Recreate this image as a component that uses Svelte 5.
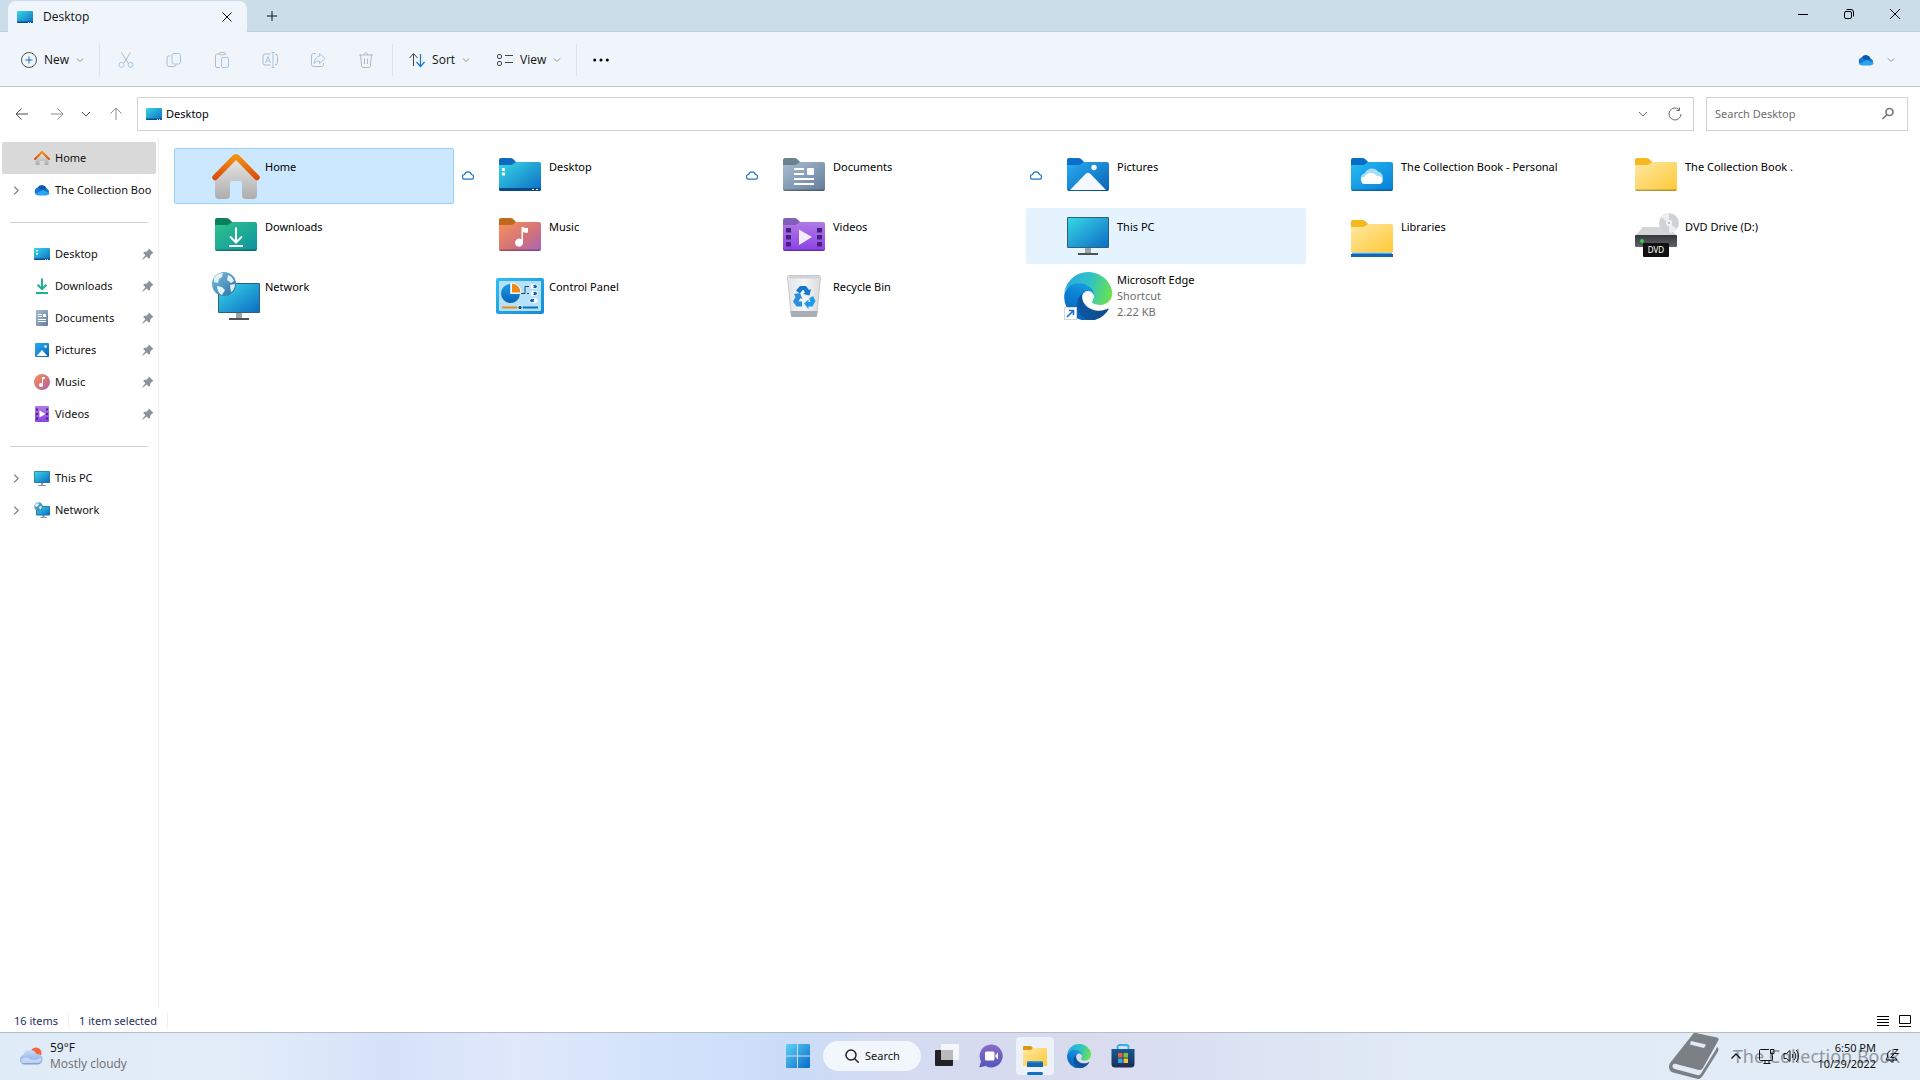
<script>
	const tools = ['Cut', 'Copy', 'Paste', 'Rename', 'Share', 'Delete'];

	const pinned = ['Desktop', 'Downloads', 'Documents', 'Pictures', 'Music', 'Videos'];

	const files = [
		{ name: 'Home', icon: 'home', selected: true },
		{ name: 'Desktop', icon: 'folder-desktop', cloud: true },
		{ name: 'Documents', icon: 'folder-documents', cloud: true },
		{ name: 'Pictures', icon: 'folder-pictures', cloud: true },
		{ name: 'The Collection Book - Personal', icon: 'folder-onedrive' },
		{ name: 'The Collection Book .', icon: 'folder' },
		{ name: 'Downloads', icon: 'folder-downloads' },
		{ name: 'Music', icon: 'folder-music' },
		{ name: 'Videos', icon: 'folder-videos' },
		{ name: 'This PC', icon: 'pc', hovered: true },
		{ name: 'Libraries', icon: 'libraries' },
		{ name: 'DVD Drive (D:)', icon: 'dvd' },
		{ name: 'Network', icon: 'network' },
		{ name: 'Control Panel', icon: 'control-panel' },
		{ name: 'Recycle Bin', icon: 'recycle' },
		{ name: 'Microsoft Edge', icon: 'edge-shortcut', type: 'Shortcut', size: '2.22 KB' }
	];

	// tab colour, front fill
	const folders = {
		'folder-desktop': ['#0f6cbd', 'url(#g-desk)'],
		'folder-documents': ['#6b8291', 'url(#g-docs)'],
		'folder-pictures': ['#0b6ec8', 'url(#g-pics)'],
		'folder-onedrive': ['#0a6cc4', 'url(#g-one)'],
		folder: ['#f6b81f', 'url(#g-yellow)'],
		'folder-downloads': ['#0c7f5d', 'url(#g-down)'],
		'folder-music': ['#c2681c', 'url(#g-music)'],
		'folder-videos': ['#8060b8', 'url(#g-video)']
	};
</script>

<svg class="defs" width="0" height="0" aria-hidden="true">
	<defs>
		<linearGradient id="g-desk" x1="0" y1="0" x2="1" y2="1"><stop offset="0" stop-color="#37d7e6" /><stop offset="1" stop-color="#0d6dc4" /></linearGradient>
		<linearGradient id="g-docs" x1="0" y1="0" x2="1" y2="1"><stop offset="0" stop-color="#a8bdd2" /><stop offset="1" stop-color="#647d99" /></linearGradient>
		<linearGradient id="g-pics" x1="0" y1="0" x2="1" y2="1"><stop offset="0" stop-color="#28aef0" /><stop offset="1" stop-color="#0b61b5" /></linearGradient>
		<linearGradient id="g-one" x1="0" y1="0" x2="1" y2="1"><stop offset="0" stop-color="#25bdf2" /><stop offset="1" stop-color="#087dd6" /></linearGradient>
		<linearGradient id="g-yellow" x1="0" y1="0" x2="1" y2="1"><stop offset="0" stop-color="#ffe8a3" /><stop offset="1" stop-color="#ffc936" /></linearGradient>
		<linearGradient id="g-down" x1="0" y1="0" x2="1" y2="1"><stop offset="0" stop-color="#2fc58c" /><stop offset="1" stop-color="#0e91a0" /></linearGradient>
		<linearGradient id="g-music" x1="0" y1="0" x2="1" y2="1"><stop offset="0" stop-color="#f79459" /><stop offset=".6" stop-color="#d0707c" /><stop offset="1" stop-color="#a566bd" /></linearGradient>
		<linearGradient id="g-video" x1="0" y1="0" x2="0" y2="1"><stop offset="0" stop-color="#b07be6" /><stop offset="1" stop-color="#8c40e6" /></linearGradient>
		<linearGradient id="g-wall" x1="0" y1="0" x2="0" y2="1"><stop offset="0" stop-color="#e6e6e6" /><stop offset="1" stop-color="#adadad" /></linearGradient>
		<linearGradient id="g-roof" x1="0" y1="0" x2="0" y2="1"><stop offset="0" stop-color="#f29111" /><stop offset="1" stop-color="#dc4f0b" /></linearGradient>
		<linearGradient id="g-globe" x1="0" y1="0" x2="1" y2="1"><stop offset="0" stop-color="#7cc0e2" /><stop offset="1" stop-color="#2d6f9e" /></linearGradient>
		<linearGradient id="g-panel" x1="0" y1="0" x2="1" y2="1"><stop offset="0" stop-color="#33bdf2" /><stop offset="1" stop-color="#128bd8" /></linearGradient>
		<linearGradient id="g-pie" x1="0" y1="0" x2="0" y2="1"><stop offset="0" stop-color="#1d9be8" /><stop offset="1" stop-color="#0b62b4" /></linearGradient>
		<linearGradient id="g-drive" x1="0" y1="0" x2="0" y2="1"><stop offset="0" stop-color="#33363a" /><stop offset="1" stop-color="#606468" /></linearGradient>
		<linearGradient id="g-bin" x1="0" y1="0" x2="1" y2="0"><stop offset="0" stop-color="#e3e5e8" /><stop offset=".5" stop-color="#f4f5f6" /><stop offset="1" stop-color="#d9dbde" /></linearGradient>
		<linearGradient id="g-edge1" x1="0" y1="0" x2="1" y2="0"><stop offset="0" stop-color="#0c59a4" /><stop offset="1" stop-color="#114a8b" /></linearGradient>
		<linearGradient id="g-edge2" x1=".7" y1="0" x2=".3" y2="1"><stop offset="0" stop-color="#1b9de2" /><stop offset=".5" stop-color="#0a7cd0" /><stop offset="1" stop-color="#0a60b8" /></linearGradient>
		<linearGradient id="g-edge3" x1="0" y1=".4" x2="1" y2=".6"><stop offset="0" stop-color="#2aa9e4" /><stop offset=".5" stop-color="#2fc3c5" /><stop offset="1" stop-color="#6be24e" /></linearGradient>
		<linearGradient id="g-win" gradientUnits="userSpaceOnUse" x1="0" y1="0" x2="24" y2="24"><stop offset="0" stop-color="#5fd2f8" /><stop offset="1" stop-color="#0669c8" /></linearGradient>
		<linearGradient id="g-chat" x1="0" y1="0" x2="0" y2="1"><stop offset="0" stop-color="#8a6bc4" /><stop offset="1" stop-color="#5457bd" /></linearGradient>
		<linearGradient id="g-store" x1="0" y1="0" x2="0" y2="1"><stop offset="0" stop-color="#155a97" /><stop offset="1" stop-color="#1d2b54" /></linearGradient>
		<linearGradient id="g-cloud" x1="0" y1="0" x2="0" y2="1"><stop offset="0" stop-color="#c9dcf7" /><stop offset=".6" stop-color="#9dbbea" /><stop offset="1" stop-color="#7e9fd8" /></linearGradient>
	</defs>
</svg>

{#snippet chevron()}
	<svg class="chev" viewBox="0 0 8 8" aria-hidden="true"><path d="M1 2.500 4 5.500 7 2.500" /></svg>
{/snippet}

{#snippet oneDrive()}
	<svg class="i16" viewBox="0 0 16 16" aria-hidden="true">
		<path fill="#1577d2" d="M4 13.200A3.900 3.900 0 0 1 3.600 5.600 5 5 0 0 1 12.600 6.600 3.400 3.400 0 0 1 12.500 13.200z" />
		<path fill="#0d59ae" d="M3.800 5.400A5 5 0 0 1 12.500 6.500L9 8.500z" />
		<path fill="#2ba5ee" d="M1 12 9 8l6.700 3.300a3.300 3.300 0 0 1-3.200 1.900H4A3.900 3.900 0 0 1 1 12z" />
	</svg>
{/snippet}

{#snippet desktopIcon()}
	<svg class="i16" viewBox="0 0 16 16" aria-hidden="true">
		<rect y="2" width="16" height="12" rx="1" fill="url(#g-desk)" />
		<path fill="#0c4d86" d="M0 12.500h16V13a1 1 0 0 1-1 1H1a1 1 0 0 1-1-1z" />
		<path fill="#fff" d="M11 13h1v.8h-1zM13 13h1v.8h-1z" />
	</svg>
{/snippet}

{#snippet edge()}
	<svg class="fill" viewBox="4 0 256 256" aria-hidden="true">
		<path fill="url(#g-edge1)" d="M235.680 195.460a93.730 93.730 0 0 1-10.540 4.710 101.870 101.870 0 0 1-35.900 6.460c-47.320 0-88.540-32.550-88.540-74.320a31.480 31.480 0 0 1 16.430-27.310c-42.800 1.800-53.800 46.400-53.800 72.530 0 73.880 68.090 81.370 82.760 81.370 7.910 0 19.840-2.300 27-4.560l1.310-.44a128.340 128.340 0 0 0 66.600-52.800 4 4 0 0 0-5.320-5.640z" />
		<path fill="url(#g-edge2)" d="M110.340 246.340A79.200 79.200 0 0 1 87.600 225a80.720 80.720 0 0 1 29.530-120c3.120-1.470 8.450-4.130 15.540-4a32.350 32.350 0 0 1 25.690 13 31.880 31.880 0 0 1 6.360 18.660c0-.21 24.460-79.600-80-79.600-43.900 0-80 41.660-80 78.210a130.150 130.150 0 0 0 12.110 56 128 128 0 0 0 156.380 67.110 75.550 75.550 0 0 1-62.780-8z" />
		<path fill="url(#g-edge3)" d="M156.940 153.780c-.81 1.050-3.300 2.500-3.300 5.660 0 2.610 1.700 5.120 4.720 7.230 14.380 10 41.490 8.680 41.560 8.680a59.560 59.560 0 0 0 30.270-8.350 61.380 61.380 0 0 0 30.430-52.880c.26-22.410-8-37.310-11.340-43.910C228.090 28.760 182.350 0 132.610 0a128 128 0 0 0-128 126.200c.48-36.540 36.800-66.050 80-66.050 3.500 0 23.460.34 42 10.070 16.340 8.580 24.900 18.940 30.850 29.210 6.180 10.670 7.280 24.150 7.280 29.520 0 5.370-2.740 13.330-7.800 19.830z" />
	</svg>
{/snippet}

{#snippet toolIcon(name)}
	<svg class="tool-icon" viewBox="0 0 16 16" aria-hidden="true">
		{#if name === 'Cut'}
			<path d="M3.500.5 10 11M12.500.5 6 11" />
			<g class="blue"><circle cx="3.500" cy="12.800" r="2.500" /><circle cx="12.500" cy="12.800" r="2.500" /></g>
		{:else if name === 'Copy'}
			<path d="M4.500 4H3a2 2 0 0 0-2 2v6.500a2 2 0 0 0 2 2h5a2 2 0 0 0 2-2" />
			<rect class="blue" x="6" y="1.500" width="8.500" height="10.500" rx="2" />
		{:else if name === 'Paste'}
			<path d="M5 2H3a1.500 1.500 0 0 0-1.500 1.500V14A1.500 1.500 0 0 0 3 15.500h3M11 2h1.500M5 1.500C5 1 5.500.5 6 .5h4c.6 0 1 .5 1 1s-.4 1.200-1 1.200H6c-.6 0-1-.6-1-1.200z" />
			<rect class="blue" x="7.500" y="5.500" width="7" height="10" rx="1.500" />
		{:else if name === 'Rename'}
			<path d="M8.500 2H3a2 2 0 0 0-2 2v7a2 2 0 0 0 2 2h5.500M13 2a2.500 2.500 0 0 1 2.500 2.500v6A2.500 2.500 0 0 1 13 13" />
			<path class="blue" d="M11 .500v15M9.500.500h3M9.500 15.500h3M3.500 11 6 4.500 8.500 11M4.500 9h3" />
		{:else if name === 'Share'}
			<path d="M6 1.500H3.500a2 2 0 0 0-2 2v9a2 2 0 0 0 2 2h8a2 2 0 0 0 2-2V11" />
			<path class="blue" d="M9.500 1.500 15 6.500l-5.500 5V9C7 9 5.500 10 4 11.500 4.500 7.500 6.500 4.700 9.500 4z" />
		{:else}
			<path d="M1 3h14M6 3c0-3 4-3 4 0M2.500 3l1.200 11a1.600 1.600 0 0 0 1.600 1.500h5.400a1.600 1.600 0 0 0 1.600-1.500l1.200-11M6.500 6.500v5.500M9.500 6.500v5.500" />
		{/if}
	</svg>
{/snippet}

{#snippet navIcon(name)}
	{#if name === 'Desktop'}
		<svg class="i16" viewBox="0 0 16 16" aria-hidden="true">
			<rect y="2" width="16" height="12" rx="1" fill="url(#g-desk)" />
			<path fill="#0c4d86" d="M0 12.500h16V13a1 1 0 0 1-1 1H1a1 1 0 0 1-1-1z" />
			<path fill="#fff" d="M11 13h1v.8h-1zM13 13h1v.8h-1zM2 4h2v1.500H2zM2 7h2v1.500H2z" />
		</svg>
	{:else if name === 'Downloads'}
		<svg class="i16" viewBox="0 0 16 16" aria-hidden="true">
			<path fill="none" stroke="#1fae92" stroke-width="2" d="M8 .500v10.500M3.500 6.700 8 11l4.500-4.300M2 15h12" />
		</svg>
	{:else if name === 'Documents'}
		<svg class="i16" viewBox="0 0 16 16" aria-hidden="true">
			<rect x="2" width="12" height="16" rx="1" fill="url(#g-docs)" />
			<path fill="none" stroke="#fff" d="M4 4.500h4M4 6.500h4M4 9.500h8M4 11.500h8" /><path fill="#fff" d="M9 4h3v3H9z" />
		</svg>
	{:else if name === 'Pictures'}
		<svg class="i16" viewBox="0 0 16 16" aria-hidden="true">
			<rect x="1" y="1" width="14" height="14" rx="1" fill="url(#g-pics)" />
			<path fill="#fff" d="M2.500 14 8 8l5.500 6z" /><circle cx="11.500" cy="4.500" r="1.300" fill="#fff" />
		</svg>
	{:else if name === 'Music'}
		<svg class="i16" viewBox="0 0 16 16" aria-hidden="true">
			<circle cx="8" cy="8" r="8" fill="url(#g-music)" />
			<path fill="#fff" d="M8 3h3v2H9v6a2 2 0 1 1-1-1.700z" />
		</svg>
	{:else if name === 'Videos'}
		<svg class="i16" viewBox="0 0 16 16" aria-hidden="true">
			<rect x="1" width="14" height="16" rx="1" fill="url(#g-video)" />
			<path fill="#472480" d="M2 2.500h2v2H2zM2 7h2v2H2zM2 11.500h2v2H2zM12 2.500h2v2h-2zM12 7h2v2h-2zM12 11.500h2v2h-2z" />
			<path fill="#fff" d="M5.500 4.500 11.500 8l-6 3.500z" />
		</svg>
	{/if}
{/snippet}

{#snippet bigIcon(name)}
	<svg class="fill" viewBox="0 0 48 48" aria-hidden="true">
		{#if folders[name]}
			<path fill={folders[name][0]} d="M3 8a2 2 0 0 1 2-2h9c3 0 4 2 6 4h22v6H3z" />
			<path fill={folders[name][1]} d="M3 13h12c3 0 3-3 6-3h22a2 2 0 0 1 2 2v25a2 2 0 0 1-2 2H5a2 2 0 0 1-2-2z" />
			<path fill="#000" opacity=".28" d="M3 37.500h42a2 2 0 0 1-2 1.500H5a2 2 0 0 1-2-1.500z" />
		{/if}
		{#if name === 'folder-desktop'}
			<path fill="#084a86" d="M3 36h42v1a2 2 0 0 1-2 2H5a2 2 0 0 1-2-2z" />
			<path fill="#fff" d="M6 16h3v3H6zM6 20.500h3v3H6zM36 37h2v1h-2zM40 37h2v1h-2z" />
		{:else if name === 'folder-documents'}
			<path fill="none" stroke="#fff" stroke-width="2" d="M14 17h10M14 22h10M14 27h20M14 32h20" />
			<rect x="27" y="16" width="7" height="7" rx="1" fill="#fff" />
		{:else if name === 'folder-pictures'}
			<path fill="#f4f9ff" d="M6 38 21.500 22a3.500 3.500 0 0 1 5 0L42 38z" /><circle cx="30" cy="15.500" r="2.700" fill="#fff" />
		{:else if name === 'folder-onedrive'}
			<path fill="#a9ddf7" d="M13 29a6 6 0 0 1 4-8 7.500 7.500 0 0 1 13-1.500 6 6 0 0 1 4 9z" />
			<path fill="#fff" d="M17 32a3.500 3.500 0 0 1-.5-7 7 7 0 0 1 12.500-.5 4 4 0 0 1 3 7.500z" />
		{:else if name === 'folder-downloads'}
			<path fill="none" stroke="#fff" stroke-width="2" d="M24 15.500V30M18 24.500l6 6 6-6M17 34h14" />
		{:else if name === 'folder-music'}
			<path fill="#fff" d="M25.500 15h1.500c1.500 1 3 1 5 1v4.500c-2 .5-4 0-5-.500v10.500a4 4 0 1 1-1.500-3z" />
		{:else if name === 'folder-videos'}
			<path fill="#43217c" d="M6 16h5v4.500H6zM6 23h5v4.500H6zM6 30h5v4.500H6zM37 16h5v4.500h-5zM37 23h5v4.500h-5zM37 30h5v4.500h-5z" />
			<path fill="#f3ecfb" d="M19 17.500 32 25 19 33z" />
		{:else if name === 'home'}
			<path fill="url(#g-wall)" d="M24 7 45 26v17a4 4 0 0 1-4 4h-7a4 4 0 0 1-4-4V31a2 2 0 0 0-2-2h-8a2 2 0 0 0-2 2v12a4 4 0 0 1-4 4H7a4 4 0 0 1-4-4V26z" />
			<path fill="none" stroke="url(#g-roof)" stroke-width="5.500" stroke-linecap="round" stroke-linejoin="round" d="M3 25.500 22.500 5.500a2 2 0 0 1 3 0L45 25.500" />
		{:else if name === 'pc'}
			<rect x="21" y="36" width="6" height="6" fill="#9aa4ab" /><rect x="14" y="41" width="20" height="2" fill="#4b5258" />
			<rect x="3" y="5" width="42" height="31" rx="1" fill="#2f6177" /><rect x="4" y="6" width="40" height="29" fill="url(#g-desk)" />
		{:else if name === 'libraries'}
			<path fill="#f6b81f" d="M3 10a2 2 0 0 1 2-2h9c3 0 4 2 6 4h22v6H3z" />
			<path fill="url(#g-yellow)" d="M3 15h12c3 0 3-3 6-3h22a2 2 0 0 1 2 2v26H3z" />
			<path fill="#5ba5cf" d="M4 40.500h40v2H4z" /><path fill="#1464b0" d="M3 42h42v3H3z" />
		{:else if name === 'dvd'}
			<path fill="#d3d5d8" d="m11 15 26 0 8 9H3z" />
			<rect x="3" y="23" width="42" height="12" rx="1" fill="url(#g-drive)" /><circle cx="10" cy="29" r="2" fill="#37d24a" />
			<circle cx="37" cy="11" r="10" fill="#cfd3d6" /><path fill="#eceeef" d="M37 11 29 5a10 10 0 0 1 8-4zM37 11l8 6a10 10 0 0 1-8 4z" />
			<circle cx="37" cy="11" r="3" fill="#f7f7f7" /><circle cx="37" cy="11" r="1.300" fill="#bfc3c6" />
			<rect x="11" y="31" width="26" height="14" rx="1" fill="#111" />
			<text x="24" y="41" text-anchor="middle" class="dvd-label">DVD</text>
		{:else if name === 'network'}
			<rect x="24" y="41" width="6" height="5" fill="#9aa4ab" /><rect x="17" y="46" width="20" height="2" fill="#4b5258" />
			<rect x="6" y="11" width="42" height="30" rx="1" fill="#2f6177" /><rect x="7" y="12" width="40" height="28" fill="url(#g-desk)" />
			<circle cx="12" cy="12" r="12" fill="url(#g-globe)" />
			<path fill="#e4f2fa" d="M2 6c3-4 6-5 9-5l-1 4-3 2-1 4-4-1zM5 14l5 1 3 3-3 5c-3-1-5-5-5-9zM16 3c3 1 5 3 6 6l-3 2-4-3zM18 13l5-1c0 4-2 7-4 8z" />
		{:else if name === 'control-panel'}
			<rect y="6" width="48" height="36" rx="2" fill="url(#g-panel)" /><rect x="3" y="9" width="42" height="30" rx="1" fill="#b5e2f9" />
			<path fill="url(#g-pie)" d="M14 12a9.500 9.500 0 1 0 10 10H14z" /><path fill="#f08a15" stroke="#fff" d="M15.500 11a9.500 9.500 0 0 1 9.500 10h-9.500z" />
			<path fill="none" stroke="#0f4b83" d="M25 21.500h4v-7h5M31 21.500h3" />
			<g fill="#0d66ba" stroke="#fff"><rect x="33.500" y="12.500" width="8" height="4" rx="2" /><rect x="33.500" y="19.500" width="8" height="4" rx="2" /><rect x="33.500" y="26.500" width="8" height="4" rx="2" /></g>
			<g fill="#fff"><circle cx="36" cy="14.500" r="1.800" /><circle cx="36" cy="21.500" r="1.800" /><circle cx="39.500" cy="28.500" r="1.800" /></g>
			<path stroke="#f08a15" stroke-width="2" d="M6 35.500h17" /><path stroke="#0b6fc2" stroke-width="2" d="M24 35.500h18" /><circle cx="24" cy="35.500" r="2.300" fill="#0b5ca8" stroke="#fff" />
		{:else if name === 'recycle'}
			<path fill="url(#g-bin)" stroke="#c6c9cd" d="M7.500 4.500 9 3.500h30l1.500 1L37 41H11z" />
			<path fill="#d0d3d7" d="M9 4h30l-1 2.500H10z" />
			<path fill="#a9aeb6" d="M10.500 39h27l-.5 5a1 1 0 0 1-1 1H12a1 1 0 0 1-1-1z" />
			<path fill="#1878d0" d="m20 14 6 0 3 4 2-1-1.500 6.500L23 22l2-1.500-2-3-3 4-4-3z" />
			<path fill="#209be8" d="m33 24 2.500 5-3 5.500h-4V37L24 31.500l4.500-4v2.500h2l-1.500-3.500z" />
			<path fill="#2a8fe0" d="m14 22 6-1 2.500 6-2.200-.8-1.800 3.300H22v5h-5.500L13 29.500l2.500-4.500z" />
		{/if}
	</svg>
{/snippet}

<div class="window">
	<header class="titlebar">
		<div class="tab">
			{@render desktopIcon()}
			<span class="tab-name">Desktop</span>
			<button class="plain" aria-label="Close tab"><svg class="i10" viewBox="0 0 10 10"><path d="m.5.5 9 9M9.500.5l-9 9" /></svg></button>
		</div>
		<button class="plain new-tab" aria-label="New tab"><svg class="i10" viewBox="0 0 10 10"><path d="M5 0v10M0 5h10" /></svg></button>
		<div class="caption">
			<button class="plain" aria-label="Minimize"><svg class="i10" viewBox="0 0 10 10"><path d="M0 5.500h10" /></svg></button>
			<button class="plain" aria-label="Restore"><svg class="i10" viewBox="0 0 10 10"><rect x=".5" y="2.500" width="7" height="7" rx="1.500" /><path d="M2.500.5H7A2.500 2.500 0 0 1 9.500 3v4.500" /></svg></button>
			<button class="plain" aria-label="Close"><svg class="i10" viewBox="0 0 10 10"><path d="m0 0 10 10M10 0 0 10" /></svg></button>
		</div>
	</header>

	<div class="toolbar">
		<button class="command">
			<svg class="i16" viewBox="0 0 16 16"><circle cx="8" cy="8" r="7.500" fill="none" stroke="#555" /><path stroke="#1a6fc0" d="M8 4.500v7M4.500 8h7" /></svg>
			New {@render chevron()}
		</button>
		<div class="tools">
			{#each tools as tool}
				<button class="tool" aria-label={tool} disabled>{@render toolIcon(tool)}</button>
			{/each}
		</div>
		<button class="command">
			<svg class="i16" viewBox="0 0 16 16" fill="none"><path stroke="#444" d="M4.500 14V2M.5 6l4-4.500 4 4.500" /><path stroke="#1a74cc" stroke-width="1.200" d="M11.500 2v12M7.500 10l4 4.500 4-4.500" /></svg>
			Sort {@render chevron()}
		</button>
		<button class="command">
			<svg class="i16" viewBox="0 0 16 16" fill="none" stroke="#444"><rect x=".5" y="2.500" width="4" height="4" rx="1.500" /><rect x=".5" y="9.500" width="4" height="4" rx="1.500" /><path d="M8 3.500h8M8 10.500h8" /></svg>
			View {@render chevron()}
		</button>
		<button class="command more" aria-label="See more">
			<svg class="i16" viewBox="0 0 16 16"><circle cx="1.700" cy="8" r="1.500" /><circle cx="8" cy="8" r="1.500" /><circle cx="14.300" cy="8" r="1.500" /></svg>
		</button>
		<button class="command account" aria-label="OneDrive">{@render oneDrive()}{@render chevron()}</button>
	</div>

	<div class="address-row">
		<div class="history">
			<button class="plain" aria-label="Back"><svg class="i14" viewBox="0 0 14 14"><path d="M13 7H1M6.500 1.500 1 7l5.500 5.500" /></svg></button>
			<button class="plain dim" aria-label="Forward"><svg class="i14" viewBox="0 0 14 14"><path d="M1 7h12M7.500 1.500 13 7l-5.500 5.500" /></svg></button>
			<button class="plain narrow" aria-label="Recent locations"><svg class="i10" viewBox="0 0 10 10"><path d="m1 3 4 4 4-4" /></svg></button>
			<button class="plain dim" aria-label="Up"><svg class="i14" viewBox="0 0 14 14"><path d="M7 13V1M1.500 6.500 7 1l5.500 5.500" /></svg></button>
		</div>
		<div class="address">
			{@render desktopIcon()}
			<span class="path">Desktop</span>
			<button class="plain" aria-label="Previous locations"><svg class="i10" viewBox="0 0 10 10"><path d="m1 3 4 4 4-4" /></svg></button>
			<button class="plain" aria-label="Refresh"><svg class="i14" viewBox="0 0 14 14"><path d="M13 7a6 6 0 1 1-2-4.500M11.500.5v3h-3" /></svg></button>
		</div>
		<label class="search">
			<input type="text" placeholder="Search Desktop" aria-label="Search Desktop" />
			<svg class="i14" viewBox="0 0 14 14"><circle cx="8.500" cy="5" r="3.500" stroke-width="1.700" /><path stroke-width="1.700" d="M6 7.500 1.500 12" /></svg>
		</label>
	</div>

	<div class="body">
		<nav class="sidebar">
			<a class="current" href="#home">
				<svg class="i16" viewBox="0 0 16 16"><path fill="url(#g-wall)" d="m8 3 6.500 6v6h-4v-4h-5v4h-4V9z" /><path fill="none" stroke="url(#g-roof)" stroke-width="2" stroke-linecap="round" d="M1 9 8 2l7 7" /></svg>
				<span>Home</span>
			</a>
			<a href="#onedrive">
				<svg class="expand" viewBox="0 0 8 8"><path d="m2 .5 3.500 3.500L2 7.500" /></svg>
				{@render oneDrive()}
				<span>The Collection Boo</span>
			</a>
			<hr />
			{#each pinned as name}
				<a href="#{name.toLowerCase()}">
					{@render navIcon(name)}
					<span>{name}</span>
					<svg class="pin" viewBox="0 0 12 12"><path fill="#8b949b" d="m7 .5 4.500 4.500-1.500.8-1.500 1.500-.5 2.700-1 .8-2.300-2.300L1 11.500.3 11.300.5 10.800 3.400 7.300 1.200 5 2 4l2.700-.5L6.200 2z" /></svg>
				</a>
			{/each}
			<hr />
			<a href="#pc">
				<svg class="expand" viewBox="0 0 8 8"><path d="m2 .5 3.500 3.500L2 7.500" /></svg>
				<svg class="i16" viewBox="0 0 16 16"><path fill="#8c979e" d="M7 13h2v2h3v1H4v-1h3z" /><rect y="1" width="16" height="12" rx="1" fill="#2f6f8c" /><rect x=".7" y="1.700" width="14.600" height="10.600" fill="url(#g-desk)" /></svg>
				<span>This PC</span>
			</a>
			<a href="#network">
				<svg class="expand" viewBox="0 0 8 8"><path d="m2 .5 3.500 3.500L2 7.500" /></svg>
				<svg class="i16" viewBox="0 0 16 16"><path fill="#8c979e" d="M8.500 13h2v2h2v1h-6v-1h2z" /><rect x="2" y="4" width="14" height="9.500" rx="1" fill="#1e6b98" /><rect x="2.700" y="4.700" width="12.600" height="8.100" fill="url(#g-desk)" /><circle cx="4.500" cy="4.500" r="4.300" fill="url(#g-globe)" /><path fill="#e4f2fa" d="M1 3 3 1l2 1-1 2-2 1zM5 5l2-1 1 1-2 3z" /></svg>
				<span>Network</span>
			</a>
		</nav>

		<main>
			<ul class="files">
				{#each files as file}
					<li>
						<button class="file" class:selected={file.selected} class:hovered={file.hovered}>
							<span class="status">
								{#if file.cloud}
									<svg viewBox="0 0 12 10"><path fill="#fff" stroke="#1c74c9" stroke-width="1.200" d="M3 9.200a2.300 2.300 0 0 1-.4-4.700 3.500 3.500 0 0 1 6.800 0A2.300 2.300 0 0 1 9 9.200z" /></svg>
								{/if}
							</span>
							<span class="thumb">
								{#if file.icon === 'edge-shortcut'}
									{@render edge()}
									<svg class="shortcut" viewBox="0 0 13 13"><rect x=".5" y=".5" width="12" height="12" fill="#fff" stroke="#d5d8db" /><path fill="none" stroke="#1a73c8" stroke-width="1.600" d="m3 10 6-6M5 3.500h4.500V8" /></svg>
								{:else}
									{@render bigIcon(file.icon)}
								{/if}
							</span>
							<span class="info">
								<span>{file.name}</span>
								{#if file.type}
									<small>{file.type}</small>
									<small>{file.size}</small>
								{/if}
							</span>
						</button>
					</li>
				{/each}
			</ul>
		</main>
	</div>

	<footer class="statusbar">
		<span>16 items</span>
		<span>1 item selected</span>
		<div class="views">
			<button class="plain" aria-label="Details view"><svg class="i12" viewBox="0 0 12 12"><path d="M0 1.500h12M0 4.500h12M0 7.500h12M0 10.500h12" /></svg></button>
			<button class="plain" aria-label="Large icons view"><svg class="i12" viewBox="0 0 12 12"><path d="M.5.500h11v8H.5zM0 11.500h12" /></svg></button>
		</div>
	</footer>
</div>

<div class="taskbar">
	<button class="weather">
		<svg viewBox="0 0 24 18"><circle cx="17" cy="6" r="5.500" fill="#f2683c" /><path fill="url(#g-cloud)" d="M5 17.500a5 5 0 0 1-.5-9.700 7 7 0 0 1 13-.8 5.300 5.300 0 0 1 1.500 10.500z" /><path fill="#e2edfc" opacity=".6" d="M2 15c0-5 6-5 9-3s8 0 11-1c1 3-1 5-3 5H6c-2 0-3 0-4-1z" /></svg>
		<span>59°F<small>Mostly cloudy</small></span>
	</button>

	<div class="apps">
		<button class="app" aria-label="Start">
			<svg viewBox="0 0 24 24" fill="url(#g-win)"><path d="M0 1a1 1 0 0 1 1-1h10v11.500H0zM12 0h11a1 1 0 0 1 1 1v10.500H12zM0 12.500h11V24H1a1 1 0 0 1-1-1zM12 12.500h12V23a1 1 0 0 1-1 1H12z" /></svg>
		</button>
		<button class="search-pill">
			<svg viewBox="0 0 14 14"><circle cx="6" cy="6" r="5" /><path d="m9.700 9.700 4 4" /></svg>
			Search
		</button>
		<button class="app" aria-label="Task view">
			<svg viewBox="0 0 24 24"><rect x="6" width="18" height="16" rx="1" fill="#f5f6f9" /><rect y="6" width="18" height="16" rx="1" fill="#202225" /><path fill="#b9bbbd" d="M6 6h12v10H6z" /></svg>
		</button>
		<button class="app" aria-label="Chat">
			<svg viewBox="0 0 24 24"><path fill="url(#g-chat)" d="M12 .5A11.500 11.500 0 1 1 6.500 22L1.200 23.300a.7.700 0 0 1-.8-.8L2 17.500A11.500 11.500 0 0 1 12 .5z" /><rect x="6" y="7.500" width="9.500" height="9" rx="1.500" fill="#fff" /><path fill="#fff" d="m16.500 11 2.500-2.500v7L16.500 13z" /></svg>
		</button>
		<button class="app active" aria-label="File Explorer">
			<svg viewBox="0 0 24 24"><path fill="#d99b12" d="M0 3a1 1 0 0 1 1-1h7l2 2-1 3H0z" /><path fill="url(#g-yellow)" d="M0 6h8l2-2h13a1 1 0 0 1 1 1v17H0z" /><path fill="#1667b1" d="M4 19a2 2 0 0 1 2-2h12a2 2 0 0 1 2 2v4H4z" /><path fill="#3d96d8" d="M6 17h12a2 2 0 0 1 2 1.500H4A2 2 0 0 1 6 17z" /></svg>
		</button>
		<button class="app" aria-label="Edge">{@render edge()}</button>
		<button class="app" aria-label="Store">
			<svg viewBox="0 0 24 24"><path fill="none" stroke="#31b1ea" stroke-width="1.800" d="M6.500 6V3a2 2 0 0 1 2-2h7a2 2 0 0 1 2 2v3" /><path fill="url(#g-store)" d="M.5 5h23v15a3.500 3.500 0 0 1-3.500 3.500H4A3.500 3.500 0 0 1 .5 20z" /><path fill="#ee5a36" d="M7 9h4.500v4.500H7z" /><path fill="#7fc13e" d="M12.500 9H17v4.500h-4.500z" /><path fill="#2fa6e8" d="M7 14.500h4.500V19H7z" /><path fill="#fbc02d" d="M12.500 14.500H17V19h-4.500z" /></svg>
		</button>
	</div>

	<div class="tray">
		<button class="plain" aria-label="Show hidden icons"><svg class="i10" viewBox="0 0 10 10"><path stroke-width="1.300" d="m.5 7.500 4.500-4.500 4.500 4.500" /></svg></button>
		<button class="plain status-icons" aria-label="Network and volume">
			<svg viewBox="0 0 16 16"><path d="M10 1.500H1.500A1 1 0 0 0 .5 2.500v9a1 1 0 0 0 1 1h11a1 1 0 0 0 1-1V8M4.500 15.500h7M6 12.500v3M10 12.500v3M11.500 1.500h3.500v4h-3.500zM13.200 5.500v3" /></svg>
			<svg viewBox="0 0 16 16"><path d="M1 5.500h2.500L7 2.500v11l-3.500-3H1zM9 6c1.200 1.200 1.200 2.800 0 4M11 4c2.300 2.300 2.300 5.700 0 8M13 2c3.300 3.300 3.300 8.700 0 12" /></svg>
		</button>
		<button class="clock"><span>6:50 PM</span><span>10/29/2022</span></button>
		<button class="plain" aria-label="Notifications"><svg class="i14" viewBox="0 0 14 14"><path d="M5.500 1.500A4.500 4.500 0 0 0 2.500 5.500V8L1 11h11L10.500 9M5 11c0 2.500 3.500 2.500 3.500 0M8.500.500h4.500l-4 4h4.500M5.500 5h3.500L5.500 8.500H9.500" /></svg></button>
	</div>

	<div class="watermark">
		<svg viewBox="0 0 50 46"><path fill="#7b8085" fill-rule="evenodd" d="M24 1a3 3 0 0 1 3-1l21 4.500c2 .5 2 2 1 3.500L34 35a4 4 0 0 1-4 2L7 31c-4-1-5 4-1 5l22 6c2 .5 3 0 4-1.500L46 18l2-4c2 1 1.500 3 1 4.500L34 42.500c-2 3-4 4-7 3L4 39.500C0 38-1 34 1 30zM22 8l-1 3.500L35 15l2-3.500z" /></svg>
		<span>The Collection Book</span>
	</div>
</div>

<style>
	:global(body) {
		margin: 0;
	}

	:global(#app) {
		display: flex;
		flex-direction: column;
		min-height: 100vh;
		font: 11px/16px 'Noto Sans', 'Open Sans', sans-serif;
		color: #111;
		background: #fff;
	}

	.defs {
		position: absolute;
	}

	svg {
		display: block;
		flex: none;
	}

	button {
		display: flex;
		align-items: center;
		padding: 0;
		border: 0;
		background: none;
		font: inherit;
		color: inherit;
		text-align: left;
	}

	.fill {
		width: 100%;
		height: 100%;
	}

	.i10 { width: 10px; height: 10px; }
	.i12 { width: 12px; height: 12px; }
	.i14 { width: 14px; height: 14px; }
	.i16 { width: 16px; height: 16px; }

	.plain {
		justify-content: center;
	}

	.plain svg {
		fill: none;
		stroke: currentColor;
	}

	.chev {
		width: 8px;
		height: 8px;
		fill: none;
		stroke: #8a8f94;
	}

	.window {
		flex: 1;
		display: flex;
		flex-direction: column;
	}

	.titlebar {
		display: flex;
		height: 32px;
		padding-left: 8px;
		background: #cbdde9;
		box-shadow: inset 0 -1px #b9cedd;
	}

	.tab,
	.toolbar,
	.weather {
		font-family: 'Open Sans', 'Noto Sans', sans-serif;
		font-size: 12px;
	}

	.tab {
		display: flex;
		align-items: center;
		gap: 10px;
		width: 239px;
		box-sizing: border-box;
		margin-top: 1px;
		padding: 0 15px 0 9px;
		border-radius: 8px 8px 0 0;
		background: #eff5fa;
	}

	.tab-name {
		flex: 1;
	}

	.new-tab {
		width: 50px;
	}

	.caption {
		display: flex;
		margin-left: auto;
		padding-right: 2px;
		height: 28px;
		color: #000;
	}

	.caption button {
		width: 46px;
	}

	.toolbar {
		display: flex;
		align-items: center;
		height: 52px;
		padding: 2px 20px 0 21px;
		border-bottom: 1px solid #bcc9d2;
		background: #eff5fa;
	}

	.command {
		gap: 7px;
		padding-right: 15px;
		height: 32px;
	}

	.command + .command {
		padding-left: 12px;
	}

	.tools {
		display: flex;
		padding: 0 2px;
		margin-right: 16px;
		border: solid #dce4ea;
		border-width: 0 1px;
	}

	.tool {
		justify-content: center;
		width: 48px;
		height: 32px;
	}

	.tool-icon {
		width: 16px;
		height: 16px;
		fill: none;
		stroke: #b3bac1;
	}

	.tool-icon .blue {
		stroke: #a3c6e6;
	}

	.command.more {
		padding-left: 16px;
		border-left: 1px solid #dce4ea;
	}

	.command.account {
		gap: 13px;
		margin-left: auto;
		padding-right: 5px;
	}

	.address-row {
		display: flex;
		gap: 4px;
		padding: 10px 12px 8px 4px;
	}

	.history {
		display: flex;
		color: #4c4c4c;
	}

	.history button {
		width: 35px;
	}

	.history .narrow {
		width: 24px;
	}

	.history .dim {
		color: #8f8f8f;
	}

	.address,
	.search {
		display: flex;
		align-items: center;
		box-sizing: border-box;
		height: 34px;
		border: 1px solid #d4d4d4;
		background: #fff;
	}

	.address {
		flex: 1;
		gap: 4px;
		padding: 0 4px 0 8px;
		color: #6b6b6b;
	}

	.address button {
		width: 28px;
	}

	.path {
		flex: 1;
		color: #000;
	}

	.search {
		width: 202px;
		margin-left: 8px;
		padding: 0 12px 0 8px;
	}

	.search input {
		flex: 1;
		min-width: 0;
		padding: 0;
		border: 0;
		outline: 0;
		background: none;
		font: inherit;
	}

	.search input::placeholder {
		color: #6d6d6d;
		opacity: 1;
	}

	.search svg {
		fill: none;
		stroke: #777;
	}

	.body {
		flex: 1;
		display: flex;
	}

	.sidebar {
		display: flex;
		flex-direction: column;
		width: 156px;
		padding: 3px 0 0 2px;
		border-right: 1px solid #f0f0f0;
	}

	.sidebar a {
		position: relative;
		display: flex;
		align-items: center;
		gap: 5px;
		height: 32px;
		margin-right: 2px;
		padding-left: 32px;
		border-radius: 2px;
		color: #111;
		text-decoration: none;
	}

	.sidebar a span {
		flex: 1;
		white-space: nowrap;
	}

	.sidebar .current {
		background: #d9d9d9;
	}

	.expand {
		position: absolute;
		left: 10px;
		width: 9px;
		height: 9px;
		fill: none;
		stroke: #777;
	}

	.pin {
		width: 12px;
		height: 12px;
		margin-right: 2px;
	}

	.sidebar hr {
		width: 138px;
		margin: 16px 8px 15px;
		border: 0;
		border-top: 1px solid #cfcfcf;
	}

	main {
		flex: 1;
		padding: 9px 15px;
	}

	.files {
		display: grid;
		grid-template-columns: repeat(auto-fill, 280px);
		gap: 4px;
		margin: 0;
		padding: 0;
		list-style: none;
	}

	.file {
		box-sizing: border-box;
		width: 100%;
		height: 56px;
		border: 1px solid transparent;
		border-radius: 2px;
	}

	.file.selected {
		border-color: #99d1ff;
		background: #cce8ff;
	}

	.file.hovered {
		background: #e5f3ff;
	}

	.status {
		width: 37px;
	}

	.status svg {
		width: 12px;
		height: 10px;
		margin: 0 0 2px 3px;
	}

	.thumb {
		position: relative;
		width: 48px;
		height: 48px;
	}

	.shortcut {
		position: absolute;
		left: 0;
		bottom: 0;
		width: 13px;
		height: 13px;
	}

	.dvd-label {
		font-size: 8px;
		fill: #fff;
	}

	.info {
		display: flex;
		flex-direction: column;
		min-height: 34px;
		margin-left: 5px;
		color: #000;
	}

	small {
		display: block;
		font-size: inherit;
		color: #6d6d6d;
	}

	.statusbar {
		display: flex;
		align-items: center;
		height: 22px;
		padding: 2px 9px 0 14px;
		color: #1e2f5a;
	}

	.statusbar span {
		padding-right: 10px;
		margin-right: 10px;
		border-right: 1px solid #f0f0f0;
	}

	.views {
		display: flex;
		gap: 10px;
		margin-left: auto;
		color: #000;
	}

	.taskbar {
		position: relative;
		display: flex;
		justify-content: space-between;
		height: 47px;
		border-top: 1px solid #b4bcc6;
		background: linear-gradient(90deg, #dfebf6, #e3edf9 12%, #d6e2f9 20%, #e0e8fb 27%, #d3e3fb 34%, #cbdcf8 41%, #d4dbf1 46%, #d8dbee 56%, #dce3f3 65%, #e1ebf6 75%, #e2ecf7);
	}

	.weather {
		flex: 1 0 0;
		gap: 7px;
		padding: 0 0 1px 19px;
	}

	.weather svg {
		width: 24px;
		height: 18px;
	}

	.apps {
		display: flex;
		align-items: center;
		gap: 6px;
		padding: 0 0 1px 3px;
	}

	.app {
		position: relative;
		justify-content: center;
		width: 38px;
		height: 38px;
		border-radius: 4px;
	}

	.app svg {
		width: 24px;
		height: 24px;
	}

	.app.active {
		background: #edf1fa;
	}

	.app.active::after {
		content: '';
		position: absolute;
		bottom: 0;
		left: 11px;
		width: 16px;
		height: 3px;
		border-radius: 2px;
		background: #1070c4;
	}

	.search-pill {
		gap: 6px;
		width: 98px;
		height: 30px;
		margin-right: 1px;
		box-sizing: border-box;
		padding-left: 22px;
		border-radius: 16px;
		background: #f2f6fd;
	}

	.search-pill svg {
		width: 14px;
		height: 14px;
		fill: none;
		stroke: #222;
		stroke-width: 1.5px;
	}

	.tray {
		position: relative;
		z-index: 1;
		flex: 1 0 0;
		display: flex;
		justify-content: flex-end;
		align-items: center;
		padding: 0 21px 1px 0;
	}

	.status-icons {
		gap: 8px;
		margin: 0 18px;
	}

	.status-icons svg {
		width: 16px;
		height: 16px;
	}

	.clock {
		flex-direction: column;
		align-items: flex-end;
		margin-right: 9px;
	}

	.watermark {
		position: absolute;
		top: 0;
		right: 20px;
		display: flex;
		align-items: center;
		gap: 14px;
		font-size: 18px;
		color: #90979e;
	}

	.watermark svg {
		width: 50px;
		height: 46px;
	}
</style>
